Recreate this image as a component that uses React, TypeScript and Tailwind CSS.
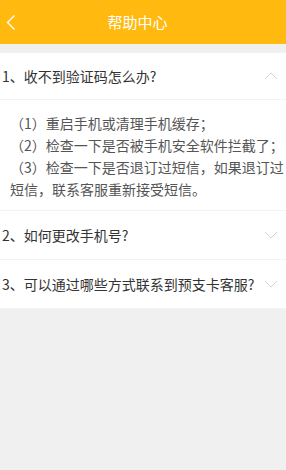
const faqs = [
  {
    q: "1、收不到验证码怎么办?",
    open: true,
    a: [
      "（1）重启手机或清理手机缓存；",
      "（2）检查一下是否被手机安全软件拦截了；",
      "（3）检查一下是否退订过短信，如果退订过短信，联系客服重新接受短信。",
    ],
  },
  { q: "2、如何更改手机号?", open: false, a: [] },
  { q: "3、可以通过哪些方式联系到预支卡客服?", open: false, a: [] },
];

function Chevron({ up }: { up: boolean }) {
  return (
    <svg width="14" height="8" viewBox="0 0 14 8" fill="none" className="shrink-0">
      <path
        d={up ? "M1 7L7 1L13 7" : "M1 1L7 7L13 1"}
        stroke="#d4d4d4"
        strokeWidth="1"
      />
    </svg>
  );
}

export default function App() {
  return (
    <div
      className="w-[286px] h-[470px] bg-[#f0f0f0] overflow-hidden"
      style={{ fontFamily: '"Noto Sans CJK SC", "Noto Sans", sans-serif' }}
    >
      {/* Header */}
      <header className="h-[44px] bg-[#ffb90f] flex items-center">
        <div className="w-[30px] flex items-center pl-[6px]">
          <svg width="10" height="15" viewBox="0 0 10 15" fill="none">
            <path d="M8.5 0.5L1.5 7.5L8.5 14.5" stroke="white" strokeWidth="1.3" />
          </svg>
        </div>
        <div className="flex-1 text-center text-white text-[15px] mr-[41px]">帮助中心</div>
      </header>

      <div className="mt-[9px] bg-white">
        {faqs.map((f, i) => (
          <div key={i} className="border-b border-[#f3f3f3]">
            <div className={`${i === 0 ? "h-[46px]" : "h-[48px]"} flex items-center pl-[2px] pr-[8px]`}>
              <span className="flex-1 text-[14px] text-[#333]">{f.q}</span>
              <Chevron up={f.open} />
            </div>
            {f.open && (
              <div className="border-t border-[#f3f3f3] pl-[10px] pt-[12px] pb-[10px] text-[14px] leading-[22px] text-[#555]">
                {f.a.map((line, j) => (
                  <p key={j}>{line}</p>
                ))}
              </div>
            )}
          </div>
        ))}
      </div>
    </div>
  );
}
